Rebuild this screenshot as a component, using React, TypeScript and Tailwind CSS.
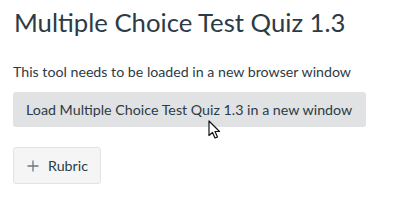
import React from "react";

export default function App() {
  return (
    <div className="relative w-[400px] h-[201px] bg-white overflow-hidden text-[#2d3b45]" style={{ fontFamily: "Lato, 'Noto Sans', sans-serif" }}>
      <div className="pl-[13px] pt-[4px] flex flex-col items-start">
        <h1 className="ml-[1px] text-[25.7px] leading-[36px] font-normal">Multiple Choice Test Quiz 1.3</h1>
        <p className="mt-[22px] text-[14.2px] leading-[20px]">This tool needs to be loaded in a new browser window</p>
        <button className="mt-[10px] h-[35px] pl-[13px] pr-[14px] bg-[#e0e2e4] rounded-[3px] text-[14.25px] text-[#2d3b45]">
          Load Multiple Choice Test Quiz 1.3 in a new window
        </button>
        <button className="mt-[20px] h-[37px] pl-[13px] pr-[12px] bg-[#f5f5f5] border border-[#e3e3e3] rounded-[3px] text-[14.25px] text-[#2d3b45] flex items-center gap-[9px]">
          <svg width="12" height="12" viewBox="0 0 12 12" className="text-[#6b7780]">
            <path d="M6 0.5V11.5M0.5 6H11.5" stroke="currentColor" strokeWidth="1.3" />
          </svg>
          <span>Rubric</span>
        </button>
      </div>
      <svg className="absolute left-[208px] top-[120px]" width="16" height="20" viewBox="0 0 16 20">
        <path d="M1 1 L1 15.5 L4.5 12.5 L7 18 L9.5 17 L7 11.5 L11.5 11.5 Z" fill="white" stroke="#111" strokeWidth="1.2" strokeLinejoin="round" />
      </svg>
    </div>
  );
}
